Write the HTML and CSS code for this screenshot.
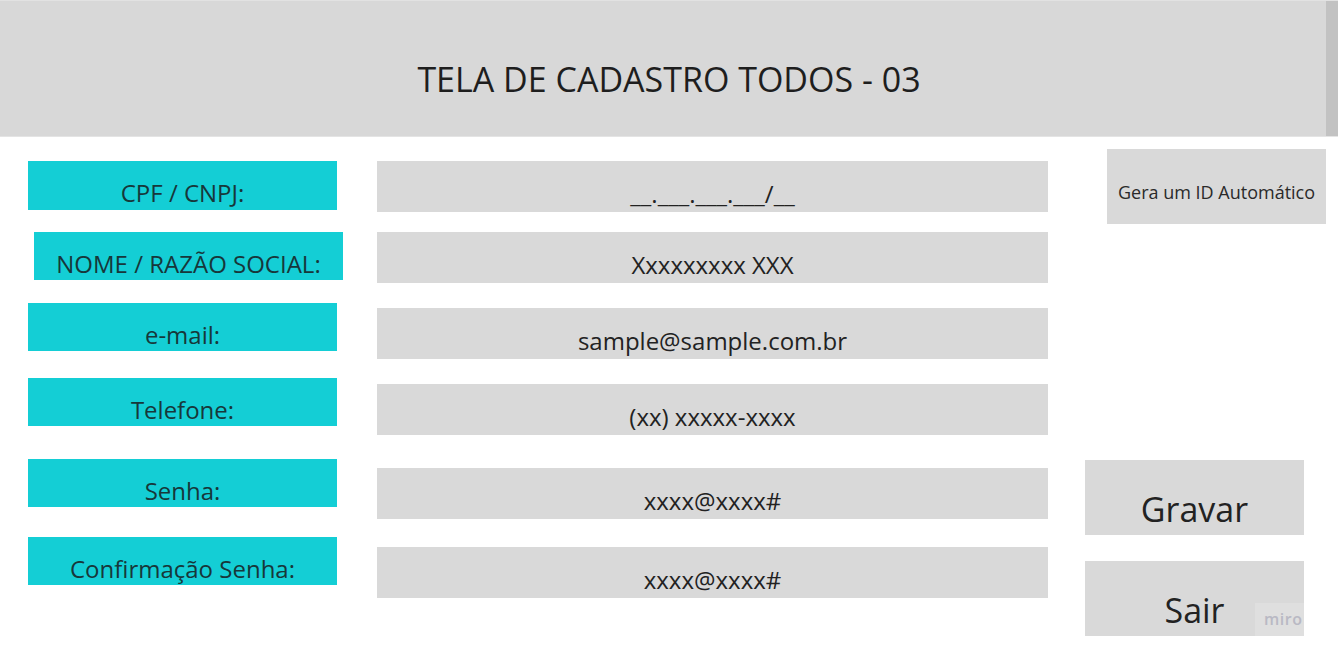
FILE: index.html
```html
<!DOCTYPE html>
<html lang="pt-BR">
<head>
<meta charset="utf-8">
<title>Tela de Cadastro Todos - 03</title>
<link rel="stylesheet" href="styles.css">
</head>
<body>
<header class="header">
  <div class="header-title">TELA DE CADASTRO TODOS - 03</div>
  <div class="header-strip"></div>
</header>
<main class="form">
  <div class="labels">
    <div class="label l1">CPF / CNPJ:</div>
    <div class="label l2">NOME / RAZÃO SOCIAL:</div>
    <div class="label l3">e-mail:</div>
    <div class="label l4">Telefone:</div>
    <div class="label l5">Senha:</div>
    <div class="label l6">Confirmação Senha:</div>
  </div>
  <div class="fields">
    <div class="field f1">__.___.___.___/__</div>
    <div class="field f2">Xxxxxxxxx XXX</div>
    <div class="field f3">sample@sample.com.br</div>
    <div class="field f4">(xx) xxxxx-xxxx</div>
    <div class="field f5">xxxx@xxxx#</div>
    <div class="field f6">xxxx@xxxx#</div>
  </div>
  <div class="actions">
    <div class="btn btn-id">Gera um ID Automático</div>
    <div class="btn btn-big btn-save">Gravar</div>
    <div class="btn btn-big btn-exit">Sair<span class="miro">miro</span></div>
  </div>
</main>
</body>
</html>
```
FILE: styles.css
```css
* { box-sizing: border-box; }
html, body { margin: 0; padding: 0; background: #ffffff; }
body {
  width: 1338px;
  height: 656px;
  overflow: hidden;
  font-family: "Open Sans", "Noto Sans", sans-serif;
  color: #222222;
}
.header {
  display: flex;
  height: 137px;
  background: #d8d8d8;
  border-top: 1px solid #e2e2e2;
  border-bottom: 1px solid #e4e4e4;
}
.header-title {
  flex: 1;
  text-align: center;
  padding-top: 55px;
  padding-left: 12px;
  font-size: 34px;
  line-height: 46px;
  color: #1e1e1e;
}
.header-strip {
  width: 12px;
  background: #c2c2c2;
}
.form {
  display: flex;
  align-items: flex-start;
}
.labels {
  display: flex;
  flex-direction: column;
  margin-left: 28px;
  width: 316px;
}
.label {
  width: 309px;
  height: 48px;
  background: #14ced5;
  color: #17373a;
  font-size: 24px;
  line-height: 32px;
  padding-top: 16px;
  text-align: center;
  white-space: nowrap;
}
.l1 { margin-top: 24px; height: 49px; }
.l2 { margin-top: 22px; margin-left: 6px; }
.l3 { margin-top: 23px; }
.l4 { margin-top: 27px; }
.l5 { margin-top: 33px; }
.l6 { margin-top: 30px; }
.fields {
  display: flex;
  flex-direction: column;
  margin-left: 33px;
  width: 671px;
}
.field {
  height: 51px;
  background: #d9d9d9;
  color: #222222;
  font-size: 24px;
  line-height: 33px;
  padding-top: 16px;
  text-align: center;
  white-space: nowrap;
}
.f1 { margin-top: 24px; }
.f2 { margin-top: 20px; }
.f3 { margin-top: 25px; }
.f4 { margin-top: 25px; }
.f5 { margin-top: 33px; }
.f6 { margin-top: 28px; }
.actions {
  display: flex;
  flex-direction: column;
  margin-left: 37px;
}
.btn {
  width: 219px;
  height: 75px;
  background: #d9d9d9;
  text-align: center;
  color: #222222;
  white-space: nowrap;
}
.btn-id {
  margin-top: 12px;
  margin-left: 22px;
  font-size: 18px;
  line-height: 25px;
  padding-top: 31px;
  color: #2a2a2a;
}
.btn-big {
  font-size: 34px;
  line-height: 44px;
  padding-top: 27px;
}
.btn-save { margin-top: 236px; }
.btn-exit { margin-top: 26px; position: relative; }
.miro {
  position: absolute;
  right: 0;
  bottom: 0;
  width: 49px;
  height: 33px;
  background: #dfdfdf;
  color: #b9b9c4;
  font-size: 16px;
  font-weight: 600;
  line-height: 33px;
  letter-spacing: 0.5px;
  text-align: left;
  padding-left: 9px;
}
```
